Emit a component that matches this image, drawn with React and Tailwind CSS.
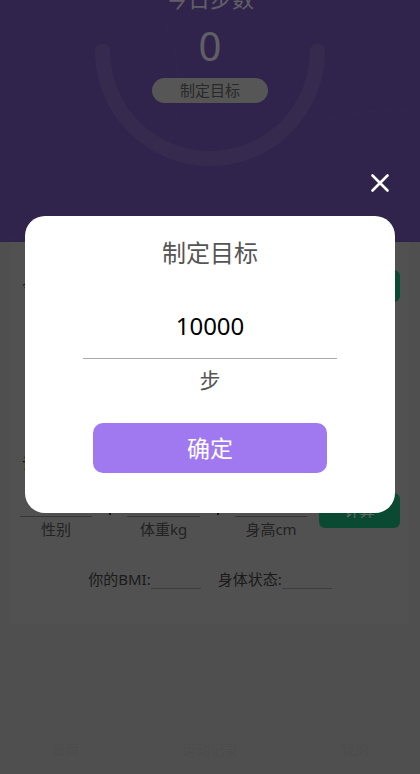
export default function App() {
  return (
    <div className="relative w-full h-[774px] overflow-hidden bg-[#c6c6c6] font-['Noto_Sans','Noto_Sans_CJK_SC',sans-serif]">
      {/* header */}
      <div className="relative h-[242px] bg-[#7858be] overflow-hidden flex flex-col items-center">
        <div className="absolute -left-[120px] -top-[60px] w-[300px] h-[300px] rounded-full border border-white/5" />
        <div className="absolute left-[180px] top-[110px] w-[420px] h-[420px] rounded-full border border-white/5" />
        <svg className="absolute left-0 top-0" width="420" height="242" viewBox="0 0 420 242">
          <path d="M102.5 51 A107.5 107.5 0 1 0 317.5 51" fill="none" stroke="rgba(255,255,255,0.12)" strokeWidth="15" strokeLinecap="round" />
        </svg>
        <div className="relative -mt-[17px] text-[22px] leading-[30px] text-white/90">今日步数</div>
        <div className="relative mt-[9px] text-[40px] leading-[48px] text-white/90">0</div>
        <button className="relative mt-[8px] w-[116px] h-[25px] rounded-full bg-[#d6d6d6] text-[15px] leading-[25px] text-[#666]">制定目标</button>
      </div>

      {/* content card */}
      <div className="mx-[10px] bg-[#cbcbcb] pb-[34px]">
        <div className="flex items-center justify-between h-[62px] pt-[26px] pl-[12px] pr-[10px]">
          <span className="text-[15px] text-[#444]">今日运动目标</span>
          <button className="w-[80px] h-[32px] rounded-[6px] bg-[#19b97d] text-white text-[15px]">去运动</button>
        </div>
        <div className="flex justify-end h-[148px] items-center pr-[20px] text-[15px] text-[#888]">
          <span>坚持运动 健康生活</span>
        </div>
        <div className="pl-[12px] text-[15px] leading-[22px] text-[#333]">计算BMI</div>
        <div className="flex items-start mt-[23px] pl-[10px] pr-[10px]">
          <div className="flex flex-col items-center w-[72px]">
            <div className="w-full h-[20px] border-b border-[#888]" />
            <span className="mt-[1px] text-[15px] leading-[22px] text-[#555]">性别</span>
          </div>
          <div className="w-[35px] flex justify-center pt-[13px]"><div className="w-[2px] h-[5px] bg-[#333]" /></div>
          <div className="flex flex-col items-center w-[73px]">
            <div className="w-full h-[20px] border-b border-[#888]" />
            <span className="mt-[1px] text-[15px] leading-[22px] text-[#555]">体重kg</span>
          </div>
          <div className="w-[35px] flex justify-center pt-[13px]"><div className="w-[2px] h-[5px] bg-[#333]" /></div>
          <div className="flex flex-col items-center w-[72px]">
            <div className="w-full h-[20px] border-b border-[#888]" />
            <span className="mt-[1px] text-[15px] leading-[22px] text-[#555]">身高cm</span>
          </div>
          <button className="ml-auto -mt-[4px] w-[81px] h-[35px] rounded-[6px] bg-[#19b97d] text-white text-[15px]">计算</button>
        </div>
        <div className="flex justify-center items-end gap-[17px] mt-[28px] text-[15px] leading-[22px] text-[#444]">
          <div className="flex items-end">
            <span>你的BMI:</span>
            <div className="w-[50px] h-[1px] bg-[#999] mb-[1px]" />
          </div>
          <div className="flex items-end">
            <span>身体状态:</span>
            <div className="w-[50px] h-[1px] bg-[#999] mb-[1px]" />
          </div>
        </div>
      </div>
      <div className="absolute left-0 right-0 bottom-[14px] flex justify-around text-[14px] text-[#bdbdbd]">
        <span>首页</span>
        <span>运动记录</span>
        <span>我的</span>
      </div>

      {/* overlay */}
      <div className="absolute inset-0 bg-black/60">
        <button className="absolute left-[368px] top-[171px] w-[24px] h-[24px] flex items-center justify-center">
          <svg width="20" height="20" viewBox="0 0 20 20">
            <path d="M2.5 2.5 L17.5 17.5 M17.5 2.5 L2.5 17.5" stroke="white" strokeWidth="2.6" strokeLinecap="round" />
          </svg>
        </button>
        <div className="absolute left-[25px] top-[216px] w-[370px] h-[297px] rounded-[20px] bg-white flex flex-col items-center">
          <div className="mt-[21px] text-[24px] leading-[32px] text-[#555]">制定目标</div>
          <div className="mt-[40px] w-[254px] h-[50px] border-b border-[#aaa] flex justify-center pt-[2px]">
            <span className="text-[24px] leading-[30px] text-black">10000</span>
          </div>
          <div className="mt-[7px] text-[21px] leading-[28px] text-[#555]">步</div>
          <button className="mt-[29px] w-[234px] h-[50px] rounded-[10px] bg-[#a078f0] text-white text-[23px]">确定</button>
        </div>
      </div>
    </div>
  );
}
